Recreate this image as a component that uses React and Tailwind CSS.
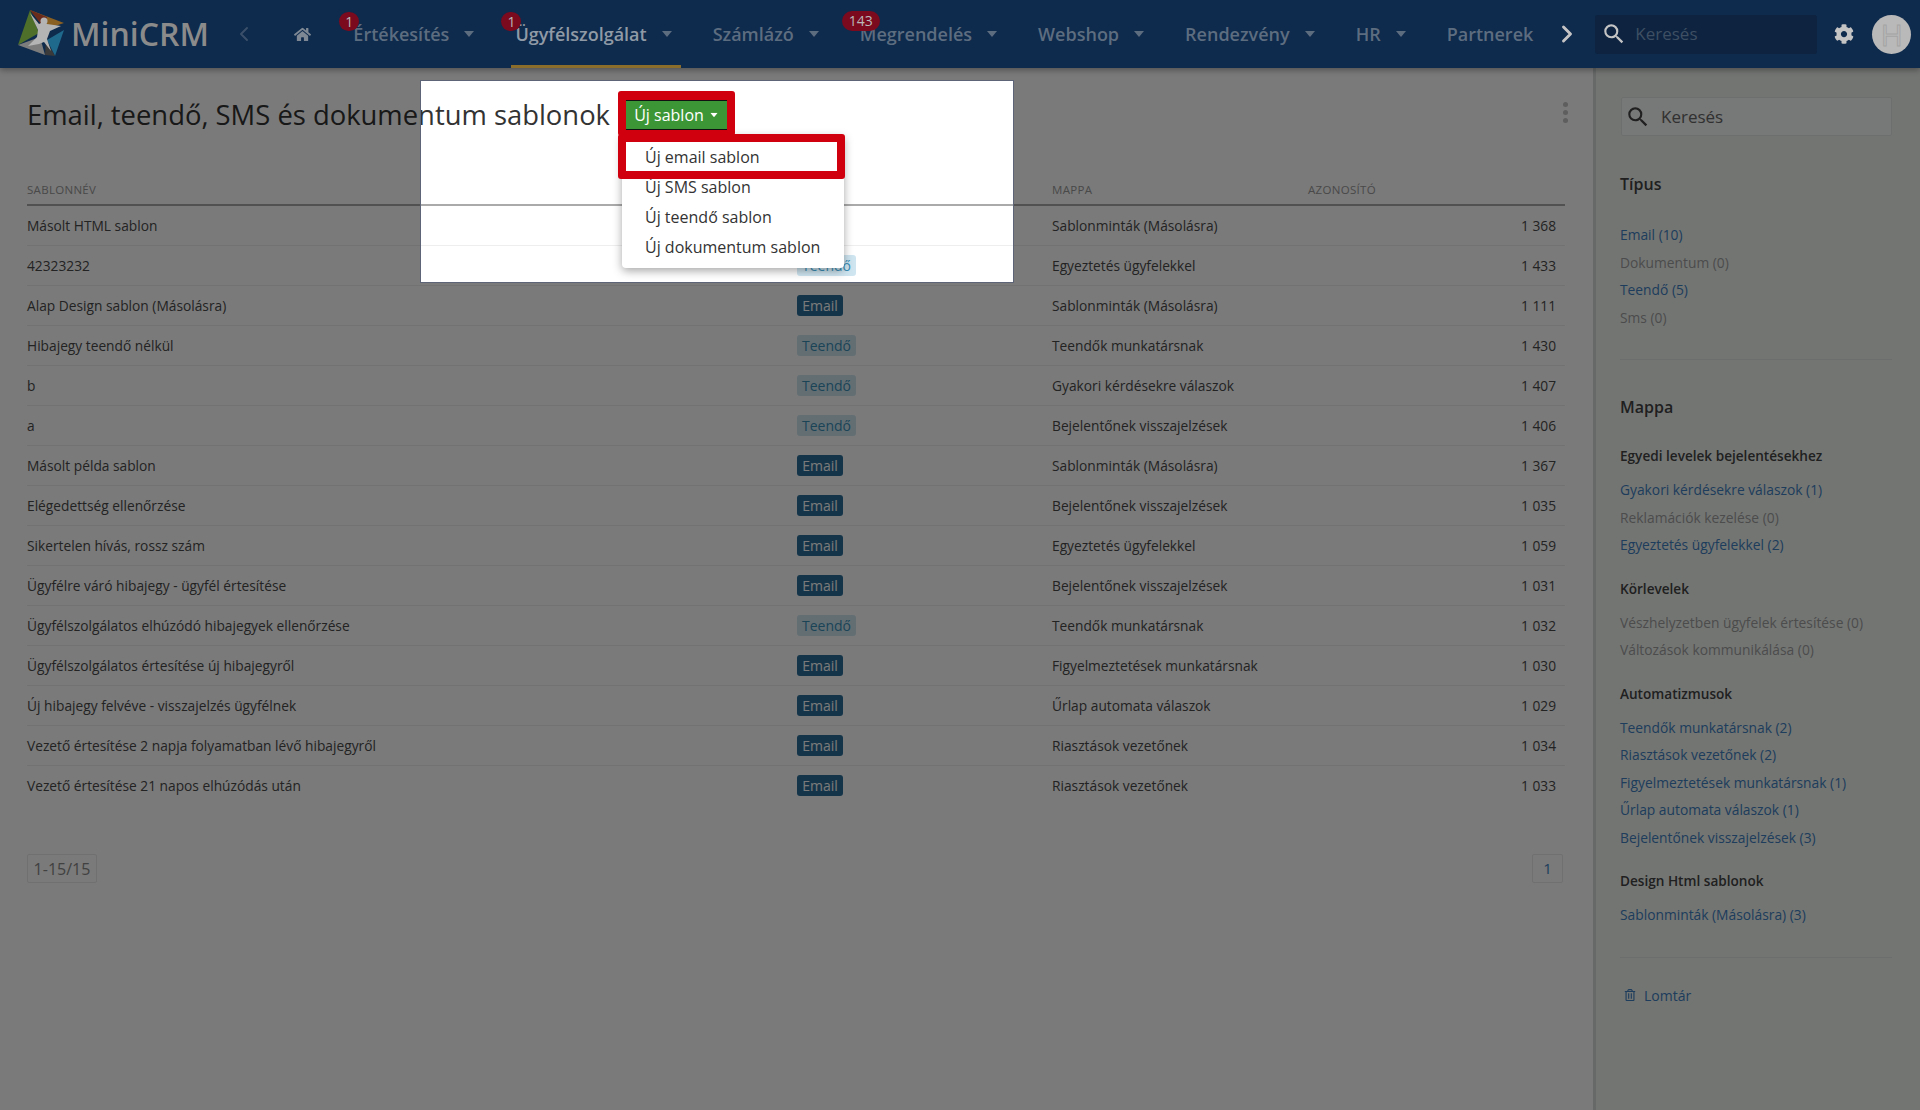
import React from "react";
import { FaHome, FaCog, FaRegTrashAlt } from "react-icons/fa";
import { MdSearch } from "react-icons/md";
import { ChevronLeft, ChevronRight } from "lucide-react";

const navItems = [
  { label: "Értékesítés", badge: "1" },
  { label: "Ügyfélszolgálat", badge: "1", active: true },
  { label: "Számlázó" },
  { label: "Megrendelés", badge: "143" },
  { label: "Webshop" },
  { label: "Rendezvény" },
  { label: "HR" },
];

const rows = [
  ["Másolt HTML sablon", "Email", "Sablonminták (Másolásra)", "1 368"],
  ["42323232", "Teendő", "Egyeztetés ügyfelekkel", "1 433"],
  ["Alap Design sablon (Másolásra)", "Email", "Sablonminták (Másolásra)", "1 111"],
  ["Hibajegy teendő nélkül", "Teendő", "Teendők munkatársnak", "1 430"],
  ["b", "Teendő", "Gyakori kérdésekre válaszok", "1 407"],
  ["a", "Teendő", "Bejelentőnek visszajelzések", "1 406"],
  ["Másolt példa sablon", "Email", "Sablonminták (Másolásra)", "1 367"],
  ["Elégedettség ellenőrzése", "Email", "Bejelentőnek visszajelzések", "1 035"],
  ["Sikertelen hívás, rossz szám", "Email", "Egyeztetés ügyfelekkel", "1 059"],
  ["Ügyfélre váró hibajegy - ügyfél értesítése", "Email", "Bejelentőnek visszajelzések", "1 031"],
  ["Ügyfélszolgálatos elhúzódó hibajegyek ellenőrzése", "Teendő", "Teendők munkatársnak", "1 032"],
  ["Ügyfélszolgálatos értesítése új hibajegyről", "Email", "Figyelmeztetések munkatársnak", "1 030"],
  ["Új hibajegy felvéve - visszajelzés ügyfélnek", "Email", "Űrlap automata válaszok", "1 029"],
  ["Vezető értesítése 2 napja folyamatban lévő hibajegyről", "Email", "Riasztások vezetőnek", "1 034"],
  ["Vezető értesítése 21 napos elhúzódás után", "Email", "Riasztások vezetőnek", "1 033"],
];

const groups = [
  { title: "Egyedi levelek bejelentésekhez", items: [["Gyakori kérdésekre válaszok (1)", 1], ["Reklamációk kezelése (0)", 0], ["Egyeztetés ügyfelekkel (2)", 1]] },
  { title: "Körlevelek", items: [["Vészhelyzetben ügyfelek értesítése (0)", 0], ["Változások kommunikálása (0)", 0]] },
  { title: "Automatizmusok", items: [["Teendők munkatársnak (2)", 1], ["Riasztások vezetőnek (2)", 1], ["Figyelmeztetések munkatársnak (1)", 1], ["Űrlap automata válaszok (1)", 1], ["Bejelentőnek visszajelzések (3)", 1]] },
  { title: "Design Html sablonok", items: [["Sablonminták (Másolásra) (3)", 1]] },
];

function Caret({ className }) {
  return (
    <svg width="10" height="6" viewBox="0 0 10 6" className={className}>
      <path d="M0 0h10L5 6z" fill="currentColor" />
    </svg>
  );
}

function Logo() {
  return (
    <svg width="50" height="50" viewBox="0 0 50 50" className="shrink-0">
      <path d="M13 1 L47 14 L29 20 Z" fill="#8a5f22" />
      <path d="M13 1 L27 19 L30 8 Z" fill="#6a2a1c" />
      <path d="M13 1 L1 36 L22 24 Z" fill="#4d6f2a" />
      <path d="M47 21 L38 47 L30 31 Z" fill="#1f6a8c" />
      <path d="M1 36 L28 46 L23 28 Z" fill="#7c7c7c" />
      <path d="M28 46 L38 47 L29 31 Z" fill="#3a3a3a" />
      <path d="M13 4 L22 15 L26 13 L30 15 L44 17 L33 22 L30 30 L34 42 L27 33 L22 35 L11 37 L20 28 L21 21 Z" fill="#b4b4b4" />
      <circle cx="27" cy="12" r="3.5" fill="#b4b4b4" />
    </svg>
  );
}

function NavItem({ label, badge, active }) {
  return (
    <div className={`relative flex h-[68px] items-center gap-[15px] pl-1 pr-[9px] text-[18px] font-semibold ${active ? "border-b-[3px] border-[#8a6d2a] pt-[3px] text-[#8f9aa6]" : "text-[#5d6d80]"}`}>
      {badge && (
        <span className={`absolute flex items-center justify-center rounded-full bg-[#7b0a1e] text-[14px] font-normal leading-none text-[#b9b9b9] ${badge.length > 1 ? "-left-[14px] top-[11px] h-[20px] w-[38px]" : "-left-[10px] top-[12px] h-[19px] w-[20px]"}`}>
          {badge}
        </span>
      )}
      <span>{label}</span>
      <Caret className="text-[#5d6d80]" />
    </div>
  );
}

function TypeBadge({ type }) {
  return type === "Email" ? (
    <span className="inline-flex h-[21px] w-[46px] items-center justify-center rounded-[3px] bg-[#2b6d99] text-[14px] text-white">Email</span>
  ) : (
    <span className="inline-flex h-[21px] w-[59px] items-center justify-center rounded-[3px] bg-[#cfe6f1] text-[14px] text-[#3a8fb7]">Teendő</span>
  );
}

function SideLink({ children, on }) {
  return <div className={`h-[27.5px] text-[13.8px] leading-[27.5px] ${on ? "text-[#3f7fc0]" : "text-[#9f9f9f]"}`}>{children}</div>;
}

export default function App() {
  return (
    <div className="relative flex h-[1110px] w-[1920px] flex-col overflow-hidden bg-white font-['Open_Sans',sans-serif] text-[#4a4a4a]">
      {/* top navigation */}
      <header className="relative z-20 flex h-[68px] shrink-0 items-center bg-[#0e2a4c] shadow-[0_2px_6px_rgba(0,0,0,0.35)]">
        <div className="ml-[17px] flex items-center">
          <Logo />
          <span className="ml-[4px] text-[32px] font-semibold leading-none text-[#8b8b8b]">MiniCRM</span>
        </div>
        <ChevronLeft size={24} strokeWidth={2} className="ml-[23px] text-[#3a4f69]" />
        <FaHome size={17} className="ml-[38px] text-[#7d8894]" />
        <div className="ml-[38.5px] flex items-center gap-7">
          {navItems.map((n) => (
            <NavItem key={n.label} {...n} />
          ))}
          <span className="ml-[4px] text-[18px] font-semibold text-[#5d6d80]">Partnerek</span>
        </div>
        <ChevronRight size={28} strokeWidth={2.5} className="ml-[20px] text-[#c4c4c4]" />
        <div className="ml-[14px] flex h-[39px] w-[222px] items-center rounded-[3px] bg-[#0d2340] pl-[6px]">
          <MdSearch size={26} className="text-[#c4c4c4]" />
          <span className="ml-[8px] text-[17px] text-[#3e4f63]">Keresés</span>
        </div>
        <FaCog size={20} className="ml-[17px] text-[#c4c4c4]" />
        <div className="ml-[18px] flex h-[39px] w-[39px] items-center justify-center rounded-full bg-[#b9b9b9] text-[30px] text-transparent [-webkit-text-stroke:1px_#a4a4a4]">H</div>
      </header>

      <div className="flex min-h-0 flex-1">
        {/* main column */}
        <main className="flex w-[1593px] shrink-0 flex-col pl-[27px] pr-[28px]">
          <div className="flex h-[74px] items-center justify-between pt-[19px]">
            <div className="flex items-center">
              <h1 className="w-[583px] whitespace-nowrap text-[27.4px] font-normal leading-none text-[#333]">Email, teendő, SMS és dokumentum sablonok</h1>
              <button className="ml-[16px] flex h-[32px] w-[101px] items-center justify-center gap-[5px] border-y-2 border-[#111] bg-[#3d9636] text-[16px] text-white">
                Új sablon
                <Caret className="scale-75 text-white" />
              </button>
            </div>
            <div className="-mr-[3px] flex flex-col gap-[3px] pb-[4px]">
              <i className="h-[5px] w-[5px] rounded-full bg-[#c4c4c4]" />
              <i className="h-[5px] w-[5px] rounded-full bg-[#c4c4c4]" />
              <i className="h-[5px] w-[5px] rounded-full bg-[#c4c4c4]" />
            </div>
          </div>

          <div className="mt-[38px] grid h-[26px] grid-cols-[770px_255px_256px_1fr] border-b-2 border-[#aaa] text-[11.5px] uppercase leading-[20px] tracking-[0.3px] text-[#999]">
            <div>Sablonnév</div>
            <div />
            <div>Mappa</div>
            <div>Azonosító</div>
          </div>

          {rows.map((r, i) => (
            <div key={r[0]} className={`grid h-[40px] grid-cols-[770px_255px_256px_1fr] items-center border-b text-[13.75px] ${i < rows.length - 1 ? "border-[#eee]" : "border-transparent"}`}>
              <div className="pt-[2px]">{r[0]}</div>
              <div className="flex items-center"><TypeBadge type={r[1]} /></div>
              <div className="pt-[2px]">{r[2]}</div>
              <div className="pr-[9px] pt-[2px] text-right">{r[3]}</div>
            </div>
          ))}

          <div className="mt-[48px] flex items-center justify-between">
            <div className="flex h-[29px] w-[70px] items-center justify-center rounded-[2px] border border-[#eaeaea] text-[16px] text-[#888]">1-15/15</div>
            <div className="mr-[2px] flex h-[29px] w-[31px] items-center justify-center rounded-[2px] border border-[#eaeaea] text-[15px] text-[#3f7fc0]">1</div>
          </div>
        </main>

        {/* right sidebar */}
        <aside className="flex-1 border-l-[3px] border-[#d8dcd9] bg-[#f0f5f1] pl-[24px] pr-[28px] pt-[29px]">
          <div className="ml-[1px] flex h-[39px] w-[271px] items-center rounded-[2px] border border-[#e4e8e5] bg-[#f9fbfa] pl-[3px]">
            <MdSearch size={26} className="text-[#444]" />
            <span className="ml-[10px] text-[17px] text-[#666]">Keresés</span>
          </div>

          <h2 className="mt-[36px] text-[16px] font-semibold leading-[24px] text-[#444]">Típus</h2>
          <div className="mt-[25px]">
            <SideLink on>Email (10)</SideLink>
            <SideLink>Dokumentum (0)</SideLink>
            <SideLink on>Teendő (5)</SideLink>
            <SideLink>Sms (0)</SideLink>
          </div>
          <div className="mt-[28px] h-px bg-[#e2e6e3]" />

          <h2 className="mt-[35px] text-[16px] font-semibold leading-[24px] text-[#444]">Mappa</h2>
          <div className="mt-[24px] flex flex-col gap-[17px]">
            {groups.map((g) => (
              <section key={g.title}>
                <h3 className="mb-[7px] h-[26px] text-[13.6px] font-semibold leading-[26px] text-[#444]">{g.title}</h3>
                {g.items.map(([t, on]) => (
                  <SideLink key={t} on={on}>{t}</SideLink>
                ))}
              </section>
            ))}
          </div>
          <div className="mt-[28px] h-px bg-[#e2e6e3]" />
          <div className="mt-[27px] flex items-center pl-[4px] text-[14px] text-[#3f7fc0]">
            <FaRegTrashAlt size={12} />
            <span className="ml-[8px]">Lomtár</span>
          </div>
        </aside>
      </div>

      {/* spotlight window: everything outside it is dimmed */}
      <div className="absolute left-[420px] top-[80px] z-10 h-[203px] w-[594px] border border-[#5d6478] shadow-[0_0_0_3000px_rgba(0,0,0,0.52)]" />

      {/* open dropdown */}
      <div className="absolute left-[622px] top-[135px] z-10 flex h-[133px] w-[222px] flex-col rounded-b-[4px] bg-white pt-[7px] text-[16px] text-[#333] shadow-[0_3px_10px_rgba(0,0,0,0.35)]">
        <div className="flex h-[30px] items-center pl-[23px]">Új email sablon</div>
        <div className="flex h-[30px] items-center pl-[23px]">Új SMS sablon</div>
        <div className="flex h-[30px] items-center pl-[23px]">Új teendő sablon</div>
        <div className="flex h-[30px] items-center pl-[23px]">Új dokumentum sablon</div>
      </div>

      {/* tutorial highlights */}
      <div className="absolute left-[618px] top-[91px] z-10 h-[45px] w-[117px] rounded-[3px] border-x-[8px] border-b-[6px] border-t-[9px] border-[#d0000f]" />
      <div className="absolute left-[618px] top-[134px] z-10 h-[45px] w-[227px] rounded-[3px] border-[8px] border-[#d0000f]" />
    </div>
  );
}
